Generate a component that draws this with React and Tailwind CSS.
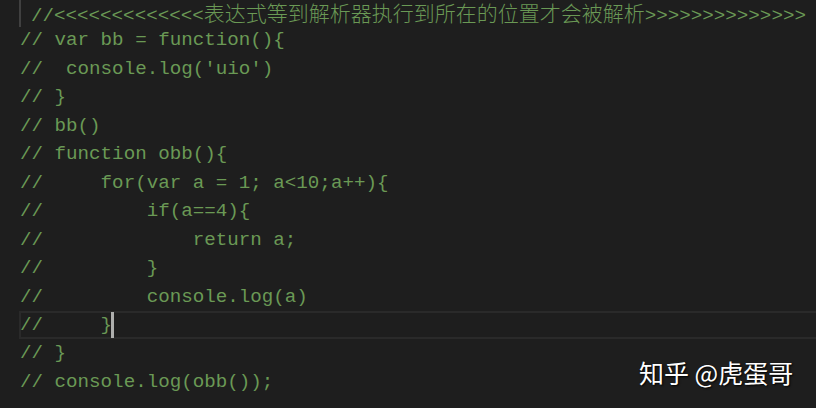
import React from 'react';

const lines = [
  '// var bb = function(){',
  "//  console.log('uio')",
  '// }',
  '// bb()',
  '// function obb(){',
  '//     for(var a = 1; a<10;a++){',
  '//         if(a==4){',
  '//             return a;',
  '//         }',
  '//         console.log(a)',
  '//     }',
  '// }',
  '// console.log(obb());',
];

const mono = "font-['Liberation_Mono','DejaVu_Sans_Mono',monospace]";

export default function App() {
  return (
    <div className="relative w-[816px] h-[408px] overflow-hidden bg-[#1e1e1e]">
      <div className={`-mt-[2px] text-[19.2px] leading-[28.46px] text-[#6a9955] whitespace-pre ${mono}`}>
        {/* first line, with the indent guide */}
        <div className="h-[28.46px] flex pl-[19px]">
          <span className="border-l-2 border-[#404040] h-[27px] mt-[2px]" />
          <span className="pl-[10px]">
            {'//<<<<<<<<<<<<<'}
            <span className="text-[21px] font-['Noto_Sans_CJK_SC',sans-serif] font-light">
              表达式等到解析器执行到所在的位置才会被解析
            </span>
            {'>>>>>>>>>>>>>>'}
          </span>
        </div>
        {lines.map((line, i) => {
          const current = i === 10;
          return (
            <div
              key={i}
              className={
                current
                  ? 'h-[28.46px] ml-[19px] pl-[1px] border-y-2 border-l-2 border-[#2a2a2a] flex items-center'
                  : 'h-[28.46px] pl-[20px] flex items-center'
              }
            >
              <span className={current ? '-ml-[2px]' : ''}>{line}</span>
              {current && <span className="w-[3px] h-[26px] -ml-[1px] bg-[#aeafad]" />}
            </div>
          );
        })}
      </div>

      {/* watermark */}
      <div className="absolute left-[639px] top-[356px] text-[25px] leading-[32px] text-white font-['Noto_Sans_CJK_SC',sans-serif] [text-shadow:1px_1px_2px_#000]">
        知乎 @虎蛋哥
      </div>
    </div>
  );
}
